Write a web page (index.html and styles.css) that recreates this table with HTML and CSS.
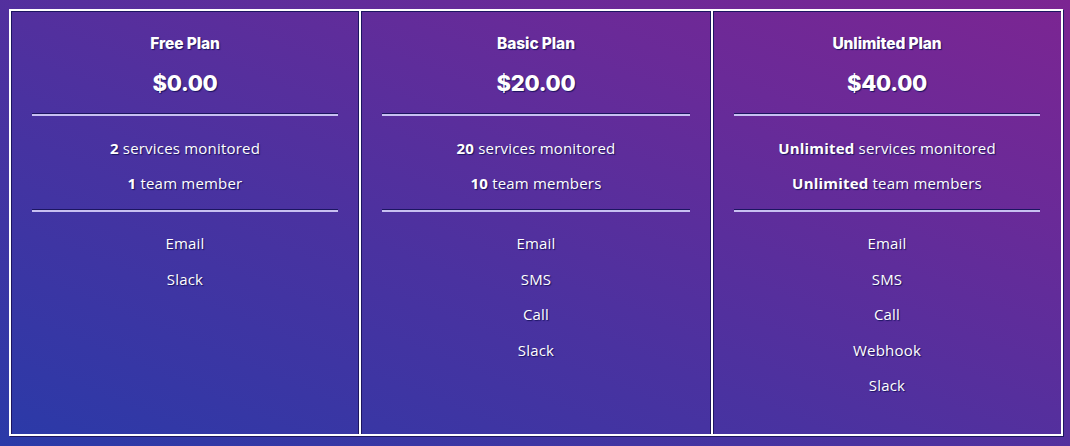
FILE: index.html
```html
<!DOCTYPE html>
<html lang="en">
<head>
<meta charset="utf-8">
<title>Pricing</title>
<link rel="stylesheet" href="styles.css">
</head>
<body>
<main class="page">
  <section class="plans">
    <article class="card">
      <h2 class="title">Free Plan</h2>
      <p class="price">$0.00</p>
      <hr class="rule">
      <ul class="list">
        <li><b>2</b> services monitored</li>
        <li><b>1</b> team member</li>
      </ul>
      <hr class="rule">
      <ul class="list channels">
        <li>Email</li>
        <li>Slack</li>
      </ul>
    </article>
    <article class="card">
      <h2 class="title">Basic Plan</h2>
      <p class="price">$20.00</p>
      <hr class="rule">
      <ul class="list">
        <li><b>20</b> services monitored</li>
        <li><b>10</b> team members</li>
      </ul>
      <hr class="rule">
      <ul class="list channels">
        <li>Email</li>
        <li>SMS</li>
        <li>Call</li>
        <li>Slack</li>
      </ul>
    </article>
    <article class="card">
      <h2 class="title">Unlimited Plan</h2>
      <p class="price">$40.00</p>
      <hr class="rule">
      <ul class="list">
        <li><b>Unlimited</b> services monitored</li>
        <li><b>Unlimited</b> team members</li>
      </ul>
      <hr class="rule">
      <ul class="list channels">
        <li>Email</li>
        <li>SMS</li>
        <li>Call</li>
        <li>Webhook</li>
        <li>Slack</li>
      </ul>
    </article>
  </section>
</main>
</body>
</html>
```

FILE: styles.css
```css
html, body {
  margin: 0;
  padding: 0;
}

body {
  font-family: "Open Sans", "DejaVu Sans", sans-serif;
  color: #fff;
}

.page {
  box-sizing: border-box;
  height: 446px;
  padding: 9px 7px 10px 9px;
  background: linear-gradient(to top right, #2a3aa8 0%, #4a32a0 40%, #6a2a98 75%, #7c2592 100%);
}

.plans {
  display: grid;
  grid-template-columns: 348px 352px 1fr;
  height: 100%;
  box-sizing: border-box;
  border: 2px solid #fff;
  box-shadow: inset 1px 1px 0 #1c1660, 1px 1px 0 #1c1660;
}

.card {
  display: flex;
  flex-direction: column;
  align-items: stretch;
  padding: 22px 21px 20px;
  text-align: center;
  text-shadow: 1px 1px 1px #1a1460;
}

.card + .card {
  border-left: 2px solid #fff;
  box-shadow: inset 1px 0 0 #1c1660, -1px 0 0 #1c1660;
}

.title {
  margin: 0;
  font-family: Inter, "Lato", sans-serif;
  font-weight: 800;
  font-size: 15.5px;
  line-height: 22px;
  letter-spacing: -0.1px;
}

.price {
  margin: 13px 0 0;
  font-family: Inter, "Lato", sans-serif;
  font-weight: 800;
  font-size: 22px;
  line-height: 30px;
  letter-spacing: -0.3px;
}

.rule {
  margin: 16px 0 0;
  height: 2px;
  border: 0;
  background: #c8c0f2;
  box-shadow: 0 -1px 0 #1c1660;
}

.list {
  list-style: none;
  margin: 22px 0 0;
  padding: 0;
  display: flex;
  flex-direction: column;
  gap: 15px;
  font-size: 15px;
  line-height: 20px;
  letter-spacing: 0.2px;
}

.list + .rule {
  margin-top: 17px;
}

.channels {
  margin-top: 21px;
  gap: 15.6px;
}

.list b {
  font-weight: 700;
}
```
